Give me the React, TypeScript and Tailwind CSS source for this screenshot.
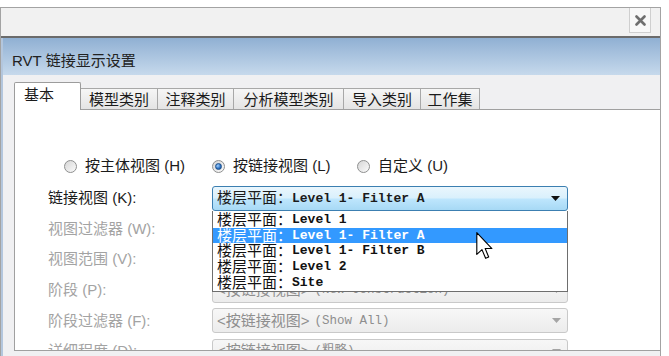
import React from 'react';

const Radio: React.FC<{ checked?: boolean }> = ({ checked }) => (
  <span className="relative flex h-[13px] w-[13px] shrink-0 items-center justify-center rounded-full border border-[#8e8f8f] bg-[linear-gradient(135deg,#d6d6d6,#fbfbfb)]">
    {checked && (
      <span className="h-[7px] w-[7px] rounded-full border border-[#1b4f8c] bg-[radial-gradient(circle_at_35%_35%,#9fd0ff,#2a6fc0_60%,#18457f)]" />
    )}
  </span>
);

const Arrow: React.FC<{ color: string }> = ({ color }) => (
  <svg width="9" height="5" viewBox="0 0 9 5">
    <path d="M0 0 H9 L4.5 5 Z" fill={color} />
  </svg>
);

const DisabledCombo: React.FC<{ sub: string }> = ({ sub }) => (
  <div className="flex h-[25px] w-[356px] items-center justify-between rounded-[3px] border border-[#c9c9c9] bg-[linear-gradient(#f7f7f7,#ececec)] pl-[4px] pr-[6px] text-[#8e8e8e]">
    <span className="flex items-center whitespace-nowrap">
      <span className="text-[15px]">&lt;按链接视图&gt;</span>
      <span className="ml-[5px] font-['Liberation_Mono','Noto_Sans_CJK_SC',monospace] text-[12.5px]">{sub}</span>
    </span>
    <Arrow color="#a5a5a5" />
  </div>
);

const items = ['Level 1', 'Level 1- Filter A', 'Level 1- Filter B', 'Level 2', 'Site'];

const rows: { label: string; dim: boolean; sub?: string }[] = [
  { label: '链接视图 (K):', dim: false },
  { label: '视图过滤器 (W):', dim: true, sub: '(无)' },
  { label: '视图范围 (V):', dim: true, sub: '(无)' },
  { label: '阶段 (P):', dim: true, sub: '(New Construction)' },
  { label: '阶段过滤器 (F):', dim: true, sub: '(Show All)' },
  { label: '详细程度 (D):', dim: true, sub: '(粗略)' },
];

const tabs = [
  { name: '模型类别', w: 'w-[77px]' },
  { name: '注释类别', w: 'w-[76px]' },
  { name: '分析模型类别', w: 'w-[110px]' },
  { name: '导入类别', w: 'w-[77px]' },
  { name: '工作集', w: 'w-[59px]' },
];

export default function App() {
  return (
    <div className="relative h-[356px] w-[669px] overflow-hidden bg-white pt-[7px] font-['Liberation_Sans','Noto_Sans_CJK_SC',sans-serif] text-[#1b1b1b]">
      <div className="flex h-[349px] w-[661px] flex-col border-l border-r border-t border-[#a3a3a3]">
        {/* window top bar */}
        <div className="flex h-[28px] shrink-0 justify-end bg-[#f1f1f1] pr-[9px]">
          <div className="flex h-[25px] w-[22px] items-center justify-center border border-t-0 border-[#cfcfcf] bg-[#f8f8f8]">
            <svg width="11" height="11" viewBox="0 0 11 11">
              <path d="M1.5 1.5 L9.5 9.5 M9.5 1.5 L1.5 9.5" stroke="#6f6f6f" strokeWidth="2.6" strokeLinecap="round" />
            </svg>
          </div>
        </div>
        <div className="h-[2px] shrink-0 bg-[#6b6b6b]" />

        {/* dialog */}
        <div className="flex min-h-0 flex-1 flex-col border-l-2 border-[#b3c6dd] bg-[#f0f0f2]">
          <div className="h-[37px] shrink-0 bg-[linear-gradient(#90b0d3,#c6d9ec)] pl-[9px] pt-[13px] text-[15px] leading-[20px] text-[#222]">
            RVT 链接显示设置
          </div>

          <div className="flex h-[34px] shrink-0 items-end pl-[11px]">
            <div className="relative z-10 -mb-px flex h-[28px] w-[67px] items-center rounded-t-[2px] border border-b-0 border-[#9c9c9c] bg-white pb-[3px] pl-[9px] text-[15px]">
              基本
            </div>
            {tabs.map((t) => (
              <div
                key={t.name}
                className={`flex h-[21px] ${t.w} items-center justify-center border-r border-t border-[#a8a8a8] bg-[linear-gradient(#f6f6f6,#e4e4e4)] text-[15px] leading-none`}
              >
                {t.name}
              </div>
            ))}
          </div>

          <div className="relative mb-[5px] ml-[11px] flex min-h-0 flex-1 flex-col overflow-hidden border-b border-l border-t border-[#a0a0a0] bg-white">
            {/* radio row */}
            <div className="ml-[49px] mt-[46px] flex h-[20px] shrink-0 items-center text-[15px]">
              <div className="flex w-[148px] items-center gap-[8px]">
                <Radio />
                <span>按主体视图 (H)</span>
              </div>
              <div className="flex w-[145px] items-center gap-[8px]">
                <Radio checked />
                <span>按链接视图 (L)</span>
              </div>
              <div className="flex items-center gap-[8px]">
                <Radio />
                <span>自定义 (U)</span>
              </div>
            </div>

            {/* fields */}
            <div className="mt-[10px] flex shrink-0 flex-col gap-[5.6px] pl-[33px]">
              {rows.map((r, i) => (
                <div key={r.label} className="flex h-[25px] shrink-0 items-center">
                  <span className={`w-[164px] text-[15px] ${r.dim ? 'text-[#a3a3a3]' : 'text-[#1b1b1b]'}`}>{r.label}</span>
                  {i === 0 ? (
                    <div className="relative">
                      <div className="flex h-[25px] w-[356px] items-center justify-between rounded-[3px] border border-[#3c7fb1] bg-[linear-gradient(#eaf6fd_0%,#d9f0fc_48%,#bee6fd_52%,#a7d9f5_100%)] pl-[4px] pr-[7px]">
                        <span className="flex items-center whitespace-nowrap">
                          <span className="text-[15px]">楼层平面：</span>
                          <span className="font-['Liberation_Mono','Noto_Sans_CJK_SC',monospace] text-[13px] font-bold">Level 1- Filter A</span>
                        </span>
                        <Arrow color="#111" />
                      </div>
                      <div className="absolute left-0 top-full z-20 w-[356px] border border-t-0 border-[#6e6e6e] bg-white py-px">
                        {items.map((it, k) => (
                          <div
                            key={it}
                            className={`flex h-[15.6px] items-center whitespace-nowrap pl-[4px] ${k === 1 ? 'bg-[#3399ff] text-white' : 'text-[#111]'}`}
                          >
                            <span className="text-[15px] leading-none">楼层平面：</span>
                            <span className="font-['Liberation_Mono','Noto_Sans_CJK_SC',monospace] text-[13px] font-bold leading-none">{it}</span>
                          </div>
                        ))}
                      </div>
                    </div>
                  ) : (
                    <DisabledCombo sub={r.sub ?? ''} />
                  )}
                </div>
              ))}
            </div>
          </div>
        </div>
      </div>

      {/* mouse cursor */}
      <svg className="absolute left-[476px] top-[232px] z-30" width="17" height="28" viewBox="0 0 12 20">
        <path d="M0.5 0.5 L0.5 16 L4.2 12.6 L6.8 18.8 L9 17.9 L6.5 11.8 L11.3 11.8 Z" fill="#fff" stroke="#000" strokeWidth="0.8" strokeLinejoin="round" />
      </svg>
    </div>
  );
}
